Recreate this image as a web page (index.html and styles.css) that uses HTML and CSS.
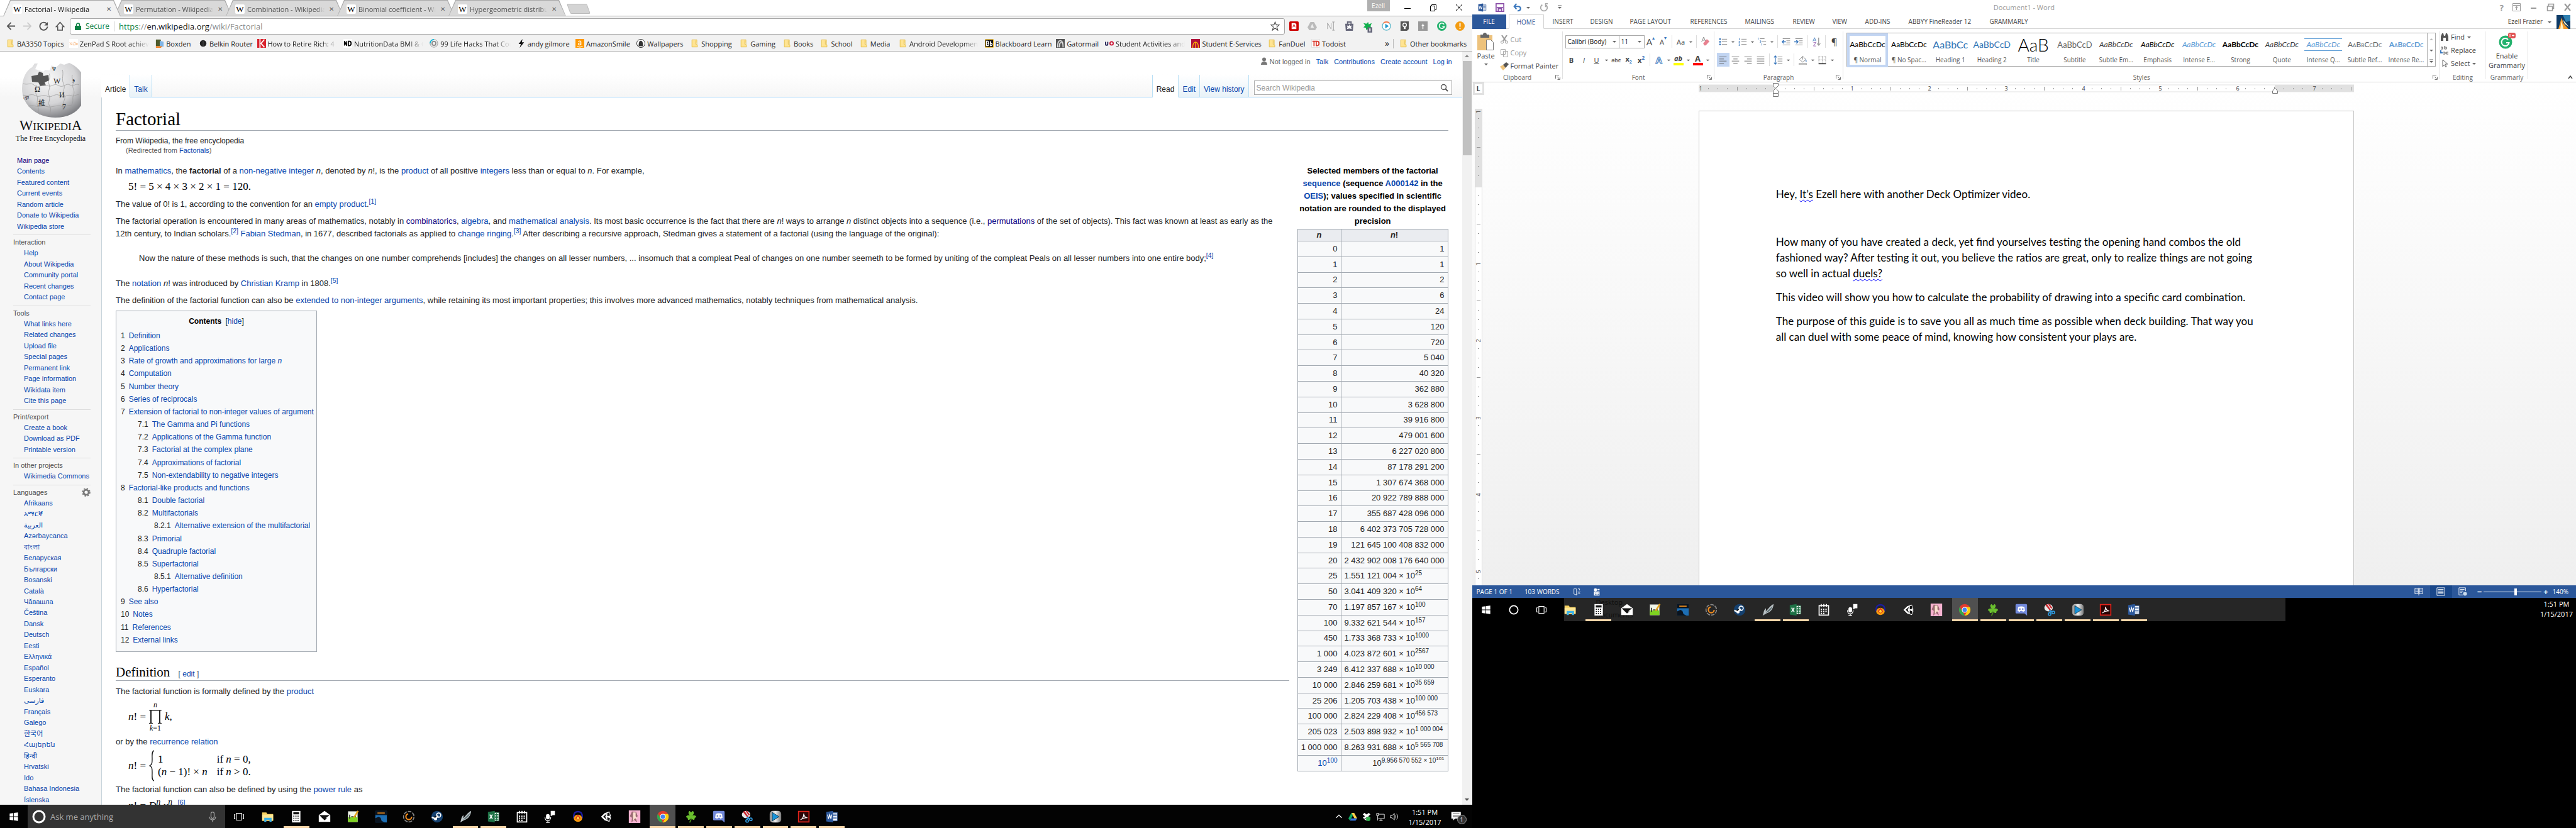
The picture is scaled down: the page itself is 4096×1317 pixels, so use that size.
FILE: index.html
```html
<!DOCTYPE html>
<html lang="en">
<head>
<meta charset="utf-8">
<title>Factorial - Wikipedia</title>
<link rel="stylesheet" href="styles.css">
</head>
<body>
<svg class="defs" aria-hidden="true">
  <defs>
    <radialGradient id="globeFill" cx="40%" cy="30%" r="75%"><stop offset="0" stop-color="#fafafa"/><stop offset=".6" stop-color="#d4d4d6"/><stop offset="1" stop-color="#77787c"/></radialGradient>
    <linearGradient id="silver" x1="0" x2="1"><stop offset="0" stop-color="#888"/><stop offset=".5" stop-color="#eee"/><stop offset="1" stop-color="#777"/></linearGradient>
    <pattern id="ticks" width="122" height="11" patternUnits="userSpaceOnUse"><path d="M15.500 5v2M30.500 5v2M45.500 5v2M61.500 3v6M76.500 5v2M91.500 5v2M106.500 5v2" stroke="#999"/></pattern>
    <pattern id="vticks" width="11" height="122" patternUnits="userSpaceOnUse"><path d="M5 15.500h2M5 30.500h2M5 45.500h2M3 61.500h6M5 76.500h2M5 91.500h2M5 106.500h2" stroke="#999"/></pattern>
    <symbol id="i-win" viewBox="0 0 24 24"><path fill="#fff" d="M4 6l7-1v6.500H4zM12 4.800L20 4v7.500h-8zM4 12.500h7V19l-7-1zM12 12.500h8V20l-8-1z"/></symbol>
    <symbol id="i-ring" viewBox="0 0 24 24"><circle cx="12" cy="12" r="8" fill="none" stroke="#fff" stroke-width="2"/></symbol>
    <symbol id="i-view" viewBox="0 0 24 24"><path fill="none" stroke="#fff" stroke-width="1.300" d="M7 5.500h10v13H7zM5 8H3v8h2M19 8h2v8h-2"/></symbol>
    <symbol id="i-folder" viewBox="0 0 24 24"><path fill="#f5cf5f" d="M1 4h8l2 3h11v13H1z"/><path fill="#fde694" d="M1 8h21v11H1z"/><path fill="#3eb3e8" d="M5 22v-8h14v8h-4v-4H9v4z"/></symbol>
    <symbol id="i-calc" viewBox="0 0 24 24"><path fill="#fff" d="M4 1h16v22H4z"/><path stroke="#111" stroke-width="2" stroke-dasharray="2 2" d="M6.500 11h12M6.500 15h12M6.500 19h12"/><path fill="#111" d="M6.500 3.500h11v4h-11z"/></symbol>
    <symbol id="i-mail" viewBox="0 0 24 24"><path fill="#fff" d="M12 1l11 8v13H1V9z"/><path fill="#111" d="M2 9h20l-8 6h3l-5 4-5-5z"/></symbol>
    <symbol id="i-npp" viewBox="0 0 24 24"><path fill="#f1f6e9" stroke="#999" d="M3 2h18v20H3z"/><path fill="#7ed321" d="M3 13h18v9H3z"/><path stroke="#333" stroke-width="2" d="M6 8v8M9 12h4M14 12h4"/><path stroke="#e6a117" stroke-width="3" d="M22 1l-8 13"/></symbol>
    <symbol id="i-kindle" viewBox="0 0 24 24"><path fill="#1d6fb5" d="M1 1h22v22H1z"/><path fill="#0a1420" d="M1 1h22v8H1zM1 23V15l6-3 4 2 2 6 6 3z"/><path stroke="#e88a1b" stroke-width="2" d="M5 5h14"/></symbol>
    <symbol id="i-origin" viewBox="0 0 24 24"><circle cx="12" cy="12" r="10" fill="none" stroke="#888" stroke-width="2" stroke-dasharray="7 2"/><circle cx="12" cy="12" r="5.500" fill="none" stroke="#f28c1e" stroke-width="2.500" stroke-dasharray="24 11"/></symbol>
    <symbol id="i-steam" viewBox="0 0 24 24"><circle cx="12" cy="12" r="11" fill="#14406f"/><circle cx="15" cy="9" r="4" fill="none" stroke="#fff" stroke-width="2"/><circle cx="9" cy="16" r="3" fill="#fff"/><path stroke="#fff" stroke-width="3" d="M2 13l7 3 5-6"/></symbol>
    <symbol id="i-feather" viewBox="0 0 24 24"><path fill="#b9c1c4" d="M23 1c-1 9-5 15-14 18l-7 4c3-6 1-9 6-14 1 2 0 4 0 6C12 12 15 5 23 1z"/><path fill="#5c6c70" d="M21 5c-3 9-9 11-13 13 3-5 8-8 13-13z"/></symbol>
    <symbol id="i-excel" viewBox="0 0 24 24"><path fill="#fff" stroke="#1e7145" d="M11 4h11v16H11z"/><path stroke="#1e7145" stroke-width="1.500" d="M14 8h7M14 11h7M14 14h7M14 17h7M17.500 5v14"/><path fill="#1e7145" d="M1 3l13-2v22L1 21z"/><path stroke="#fff" stroke-width="2" d="M4.500 8l5 8M9.500 8l-5 8"/></symbol>
    <symbol id="i-cal" viewBox="0 0 24 24"><path fill="none" stroke="#fff" stroke-width="2" d="M3 4h18v18H3zM7 1v5M12 1v5M17 1v5"/><path stroke="#fff" stroke-width="2.500" stroke-dasharray="2.500 2" d="M6 11h13M6 15h13M6 19h9"/></symbol>
    <symbol id="i-mic" viewBox="0 0 24 24"><path fill="#fff" d="M14 1h8v8h-4l-4 2z"/><rect x="5" y="7" width="7" height="10" rx="3.500" fill="#fff"/><path fill="none" stroke="#fff" stroke-width="1.500" d="M3 13c0 9 11 9 11 0M8.500 19v4M5 23h7"/></symbol>
    <symbol id="i-aud" viewBox="0 0 24 24"><path fill="none" stroke="#1c1c9c" stroke-width="3" d="M4 15V9c1-9 15-9 16 0v6"/><ellipse cx="12" cy="15" rx="8" ry="7" fill="#f79b0c"/><path fill="#d22" d="M7 15l5-7 5 7-5 4z"/><path fill="#fd3" d="M9 15l3-4 3 4-3 3z"/></symbol>
    <symbol id="i-unity" viewBox="0 0 24 24"><path fill="#fff" d="M2 12L9 5l9-3 3 9-2 1 2 2-3 8-9-3z"/><path fill="#111" d="M6 12l7-6-3 6 3 6zM14 5l4-1 1 6-5 1zM14 13l5 2-1 5-4-1z"/></symbol>
    <symbol id="i-girl" viewBox="0 0 24 24"><path fill="#f7b2d0" d="M1 0h22v24H1z"/><path fill="#9a6a72" d="M7 2l8 1 3 8-4 3 3 9-6-5-5 5 1-9-4-3z"/><path fill="#fbe0cf" d="M9 4h5v7l4 6-5-2-4 5z"/></symbol>
    <symbol id="i-chrome" viewBox="0 0 24 24"><circle cx="12" cy="12" r="11" fill="#e33b2e"/><path fill="#2da94f" d="M2.500 6.500L9 17l3 6A11 11 0 0 1 2.500 6.500z"/><path fill="#fdd20a" d="M12 7h9.800A11 11 0 0 1 12 23l5-9z"/><circle cx="12" cy="12" r="5.500" fill="#fff"/><circle cx="12" cy="12" r="4.200" fill="#4285f4"/></symbol>
    <symbol id="i-clover" viewBox="0 0 24 24"><path fill="none" stroke="#4a8d1c" stroke-width="2" d="M12 11c1 5 0 8-3 12"/><path fill="#6abf2e" d="M12 11C7 9 5 4 9 1l3 3 3-3c4 3 2 8-3 10zM12 11c-4-3-9-2-10 2l3 1 1 4c4 0 7-3 6-7zM12 11c4-3 9-2 10 2l-3 1-1 4c-4 0-7-3-6-7z"/></symbol>
    <symbol id="i-discord" viewBox="0 0 24 24"><path fill="#7289da" d="M3 1h18a2 2 0 0 1 2 2v20l-5-4H3a2 2 0 0 1-2-2V3a2 2 0 0 1 2-2z"/><path fill="#fff" d="M6 7c4-2 8-2 12 0l1 7-4 2-1-2h-4l-1 2-4-2z"/><path fill="#7289da" d="M8 9h2.500v3H8zM13.500 9H16v3h-2.500z"/></symbol>
    <symbol id="i-snip" viewBox="0 0 24 24"><ellipse cx="10" cy="8" rx="8" ry="7" fill="#e8e8e8"/><path fill="#c9252c" d="M4 3l3-2 8 12-2 1zM9 1l3 0 5 7-2 2z"/><path fill="none" stroke="#2f9be0" stroke-width="2" d="M11 13l5 3M15 12l-3 6"/><circle cx="12" cy="20" r="2.500" fill="none" stroke="#2f9be0" stroke-width="2"/><circle cx="19" cy="17" r="2.500" fill="none" stroke="#2f9be0" stroke-width="2"/></symbol>
    <symbol id="i-play" viewBox="0 0 24 24"><rect x="1" y="1" width="22" height="22" rx="6" fill="url(#silver)"/><path fill="#1892d8" stroke="#134" d="M6 4l13 8-13 8z"/></symbol>
    <symbol id="i-pdf" viewBox="0 0 24 24"><path fill="#2b0505" stroke="#e2231a" stroke-width="2" d="M2 2h20v20H2z"/><path fill="none" stroke="#fff" stroke-width="1.500" d="M6 18c4-2 6-7 6-12 0 4 3 8 7 8-5 0-10 1-13 4z"/></symbol>
    <symbol id="i-word" viewBox="0 0 24 24"><path fill="#fff" stroke="#2b579a" d="M11 4h11v16H11z"/><path stroke="#2b579a" stroke-width="1.500" d="M14 7h7M14 10h7M14 13h7M14 16h7"/><path fill="#2b579a" d="M1 3l13-2v22L1 21z"/><path fill="none" stroke="#fff" stroke-width="1.600" d="M3.500 8l1.700 8 2.300-8 2.300 8 1.700-8"/></symbol>
    <symbol id="f-folder" viewBox="0 0 14 16"><path fill="#ffe492" stroke="#e5bd43" d="M1.500 1.500h7v8l3 1v4h-10z"/><path fill="#ffe492" stroke="#e5bd43" d="M8.500 1.500h2v8"/></symbol>
    <symbol id="caret" viewBox="0 0 8 8"><path fill="#666" d="M1 3h6L4 6z"/></symbol>
    <symbol id="launcher" viewBox="0 0 8 8"><path fill="none" stroke="#777" d="M.5 6V.5H6M3 3l4 4M7.500 3.500v4h-4"/></symbol>
  </defs>
</svg>
<div class="desktop">
<section class="screen-left" aria-label="Browser">
  <header class="chrome">
    <div class="tabstrip">
      <ul class="tabs">
        <li class="tab on"><b class="fav">W</b><span>Factorial - Wikipedia</span><button aria-label="Close tab">✕</button></li>
        <li class="tab"><b class="fav">W</b><span>Permutation - Wikipedia</span><button aria-label="Close tab">✕</button></li>
        <li class="tab"><b class="fav">W</b><span>Combination - Wikipedia</span><button aria-label="Close tab">✕</button></li>
        <li class="tab"><b class="fav">W</b><span>Binomial coefficient - Wikipedia</span><button aria-label="Close tab">✕</button></li>
        <li class="tab"><b class="fav">W</b><span>Hypergeometric distribution</span><button aria-label="Close tab">✕</button></li>
      </ul>
      <button class="newtab" aria-label="New tab"></button>
      <div class="winctl"><button class="user">Ezell</button>
        <button aria-label="Minimize"><svg width="11" height="11"><path d="M0 6.500h10" stroke="#000"/></svg></button>
        <button aria-label="Restore"><svg width="11" height="11"><path d="M.5 2.500h7v8h-7zM2.500 2V.5h7v8H8" fill="none" stroke="#000"/></svg></button>
        <button aria-label="Close"><svg width="11" height="11"><path d="M0 0l10 10M10 0L0 10" stroke="#000"/></svg></button></div>
    </div>
    <div class="toolbar">
      <button aria-label="Back"><svg viewBox="0 0 16 16"><path d="M15 8H2M8 2L2 8l6 6" fill="none" stroke="#555" stroke-width="2"/></svg></button>
      <button aria-label="Forward"><svg viewBox="0 0 16 16"><path d="M1 8h13M8 2l6 6-6 6" fill="none" stroke="#ccc" stroke-width="2"/></svg></button>
      <button aria-label="Reload"><svg viewBox="0 0 16 16"><path d="M13 4a6.500 6.500 0 1 0 1.500 5" fill="none" stroke="#555" stroke-width="2"/><path d="M15 1v6H9z" fill="#555"/></svg></button>
      <button aria-label="Home"><svg viewBox="0 0 16 16"><path d="M1.500 9L8 1.500 14.500 9H12v6H4V9z" fill="none" stroke="#555" stroke-width="1.600"/></svg></button>
      <div class="omnibox">
        <svg width="10" height="12" viewBox="0 0 10 12"><path d="M2.500 6V3.500a2.500 2.500 0 0 1 5 0V6" fill="none" stroke="#0b8043" stroke-width="1.500"/><path d="M0 5h10v7H0z" fill="#0b8043"/></svg>
        <span class="secure">Secure</span>
        <span class="url"><i>https</i>://<b>en.wikipedia.org</b>/wiki/Factorial</span>
        <svg class="star" width="15" height="15" viewBox="0 0 16 16"><path d="M8 1l2 5h5l-4 3.500L12.500 15 8 11.500 3.500 15 5 9.500 1 6h5z" fill="none" stroke="#555" stroke-width="1.300"/></svg>
      </div>
      <div class="exts">
        <svg viewBox="0 0 16 16"><rect width="16" height="16" rx="2" fill="#c00"/><path d="M4 3h6l2 2v8H4z" fill="#fff"/><path d="M6 10l2-5 2 5" stroke="#c00" fill="none"/></svg>
        <svg viewBox="0 0 16 16"><path d="M5 1h6l5 9-3 5H3l-3-5z" fill="#bbb"/><path d="M8 4l3 7H5z" fill="#eee"/></svg>
        <svg viewBox="0 0 16 16"><path d="M2 13V3l6 10V3M12 1v14M10 1h4M10 15h4" fill="none" stroke="#999"/></svg>
        <svg viewBox="0 0 16 16"><path d="M1 4h14l-1 12H2z" fill="#66677a"/><path d="M5 5V1h6v4" fill="none" stroke="#66677a" stroke-width="2"/><path d="M8 5l1 3 3-1-1 3 1 3-4-1-4 1 1-3-1-3 3 1z" fill="#fff"/></svg>
        <svg viewBox="0 0 16 16"><path d="M1 3l5 1 3-3 1 4 5-2-2 5 2 4-5 0-4 3-1-4-4-1 3-3z" fill="#0fb04c"/><path d="M8 10h8v9H8z" fill="#66677a"/><path d="M12 12v5" stroke="#fff" stroke-width="2"/></svg>
        <svg viewBox="0 0 16 16"><circle cx="8" cy="8" r="7" fill="#fff" stroke="#6bc" stroke-width="1.500"/><path d="M3 3a7 7 0 0 1 10 0" stroke="#f74" fill="none" stroke-width="2"/><path d="M6 4l6 4-6 4z" fill="#29c"/></svg>
        <svg viewBox="0 0 16 16"><path d="M1 0h14v13l-3 3H1z" fill="#555"/><circle cx="8" cy="6" r="3" fill="none" stroke="#fff" stroke-width="1.500"/><path d="M8 9v4" stroke="#fff" stroke-width="3"/></svg>
        <svg viewBox="0 0 16 16"><path d="M0 0h16v16H0z" fill="#999"/><path d="M8 4v9M6 7h4" stroke="#fff" stroke-width="1.500"/></svg>
        <svg viewBox="0 0 16 16"><circle cx="8" cy="8" r="8" fill="#23b26d"/><path d="M12 5a4.500 4.500 0 1 0 .5 4H9" fill="none" stroke="#fff" stroke-width="1.700"/></svg>
        <svg viewBox="0 0 16 16"><circle cx="8" cy="8" r="8" fill="#f39c12"/><path d="M8 3v6M8 11v2" stroke="#fff" stroke-width="2"/></svg>
      </div>
    </div>
    <nav class="bookmarks" aria-label="Bookmarks">
      <a href="#"><svg><use href="#f-folder"/></svg>BA3350 Topics</a>
      <a href="#" class="long"><svg viewBox="0 0 16 16"><path fill="#fff" d="M0 0h16v16H0z"/><path d="M1 6l4 5M5 6l-4 5M8 6h3v5H7V8M13 11V8h2v3" stroke="#f7b27a" fill="none"/></svg>ZenPad S Root achieved</a>
      <a href="#"><svg viewBox="0 0 16 16"><path fill="#4d5a2c" d="M1 1h9v12H1z"/><path fill="#7fb5e6" d="M8 3l7 2v9H8z"/><path fill="#f58220" d="M1 13h12l-3 3H1z"/></svg>Boxden</a>
      <a href="#"><svg viewBox="0 0 16 16"><circle cx="8" cy="8" r="6" fill="#222"/><path d="M8 3v10" stroke="#555"/></svg>Belkin Router</a>
      <a href="#" class="long"><svg viewBox="0 0 16 16"><path fill="#d9232e" d="M0 0h16v16H0z"/><path d="M5 0v16M13 1L7 8l6 7" stroke="#fff" stroke-width="2" fill="none"/></svg>How to Retire Rich: 4 Steps</a>
      <a href="#" class="long"><svg viewBox="0 0 16 16"><path fill="#fff" d="M0 0h16v16H0z"/><path d="M2 12V4l4 8V4M9 4v8h2c4 0 4-8 0-8z" stroke="#000" stroke-width="2" fill="none"/></svg>NutritionData BMI &amp; Calories</a>
      <a href="#" class="long"><svg viewBox="0 0 16 16"><circle cx="8" cy="8" r="7" fill="none" stroke="#888"/><circle cx="8" cy="8" r="3.500" fill="none" stroke="#888" stroke-width="2"/><path d="M1 8a7 7 0 0 1 7-7" stroke="#1bd" stroke-width="2" fill="none"/></svg>99 Life Hacks That Could</a>
      <a href="#"><svg viewBox="0 0 16 16"><path d="M10 0L3 9h4l-2 7 8-10H9z" fill="#111"/></svg>andy gilmore</a>
      <a href="#"><svg viewBox="0 0 16 16"><path fill="#f90" d="M0 0h16v16H0z"/><path d="M5 5c1-2 5-2 5 0v6M10 7c-6 0-6 4-3 4 2 0 3-2 3-3M3 13c3 2 7 2 10 0" stroke="#fff" stroke-width="1.300" fill="none"/></svg>AmazonSmile</a>
      <a href="#"><svg viewBox="0 0 16 16"><circle cx="8" cy="8" r="7.500" fill="#fff" stroke="#222"/><path d="M4 13c0-6 1-10 4-10s4 4 4 10z" fill="#333"/></svg>Wallpapers</a>
      <a href="#"><svg><use href="#f-folder"/></svg>Shopping</a>
      <a href="#"><svg><use href="#f-folder"/></svg>Gaming</a>
      <a href="#"><svg><use href="#f-folder"/></svg>Books</a>
      <a href="#"><svg><use href="#f-folder"/></svg>School</a>
      <a href="#"><svg><use href="#f-folder"/></svg>Media</a>
      <a href="#" class="long"><svg><use href="#f-folder"/></svg>Android Development</a>
      <a href="#"><svg viewBox="0 0 16 16"><path fill="#111" stroke="#fb0" d="M.5 1h15v14H.5z"/><path d="M3 4v8h2c3 0 3-4 0-4 2 0 2-4 0-4zM10 4v8h1c3 0 3-4 0-4z" stroke="#fff" fill="none" stroke-width="1.500"/></svg>Blackboard Learn</a>
      <a href="#"><svg viewBox="0 0 16 16"><path fill="#555" d="M0 0h16v16H0z"/><path d="M3 15c0-6 1-12 5-12s5 5 5 12M6 15l1-7 3-2" stroke="#ddd" stroke-width="2" fill="none"/></svg>Gatormail</a>
      <a href="#" class="long"><svg viewBox="0 0 16 16"><path d="M1 5v4c0 3 4 3 4 0V5" stroke="#225" stroke-width="2" fill="none"/><circle cx="12" cy="8" r="3" fill="none" stroke="#c13" stroke-width="2"/></svg>Student Activities and</a>
      <a href="#"><svg viewBox="0 0 16 16"><path fill="#b0123b" d="M0 0h16v16H0z"/><path d="M3 16C2 2 14 2 13 16M8 6v10" stroke="#fb0" stroke-width="1.500" fill="none"/></svg>Student E-Services</a>
      <a href="#"><svg><use href="#f-folder"/></svg>FanDuel</a>
      <a href="#"><svg viewBox="0 0 16 16"><path fill="#fff" stroke="#ddd" d="M.5.5h15v15H.5z"/><path d="M2 4h6M5 4v9M9 4v8h2c4 0 4-8 0-8z" stroke="#d9372b" stroke-width="2" fill="none"/></svg>Todoist</a>
      <button class="more" aria-label="More bookmarks">»</button>
      <a href="#" class="other"><svg><use href="#f-folder"/></svg>Other bookmarks</a>
    </nav>
  </header>

  <div class="viewport">
    <aside class="side">
      <a href="#" class="logo" aria-label="Wikipedia">
        <svg width="96" height="88" viewBox="0 0 96 88">
          <path fill="url(#globeFill)" d="M22 2l5 0-4 9 7 2 6 2 3-3 7 1 3-8 7 3 7-6 6 2 8-3c18 8 26 22 26 42 0 27-18 45-48 45S2 68 2 42C2 24 10 12 18 8z"/>
          <path fill="#555" d="M17 22l10-2 2-5 6 2 1 5 8-2 1 9-7 3 2 5-9 1-3-6-10-1z"/>
          <path fill="none" stroke="#999" stroke-width=".7" d="M4 34c8 3 12-3 18 3s12-4 20 0 10-5 18 0 12-5 18-1 8-3 15 0M3 52c9 3 13-3 20 1s12-3 19 1 12-6 20-1 12-3 18 0 8-3 13-1M12 70c8-3 14 2 20 0s10 2 16 1 12-3 17-1 10-3 16-1M24 36c5 6-3 10 1 16s-1 12 2 18-1 9 4 14M45 18c4 8-3 10 0 17s-3 11 0 18-3 11 1 17-1 10 1 15M66 12c3 7-2 14 2 22s-3 11 1 18-3 10-2 18-4 8-5 13M82 20c-2 6 3 9 1 15s4 10 1 17 1 8-3 16"/>
          <g fill="#222" font-family="Liberation Serif, serif" font-size="12"><text x="22" y="47">Ω</text><text x="52" y="34">W</text><text x="61" y="56">И</text><text x="28" y="69" font-family="Noto Sans CJK SC, sans-serif" font-size="11">維</text><text x="66" y="75">7</text><text x="82" y="30" font-size="9">و</text><text x="4" y="60" font-size="9">ঞ</text><text x="50" y="14" font-size="8">Ψ</text></g>
        </svg>
        <span class="wordmark"><b>W</b>IKIPEDI<b>A</b></span>
        <span class="tagline">The Free Encyclopedia</span>
      </a>
      <ul class="top"><li><a href="#" class="seen">Main page</a></li><li><a href="#">Contents</a></li><li><a href="#">Featured content</a></li><li><a href="#">Current events</a></li><li><a href="#">Random article</a></li><li><a href="#">Donate to Wikipedia</a></li><li><a href="#">Wikipedia store</a></li></ul>
      <h3>Interaction</h3>
      <ul><li><a href="#">Help</a></li><li><a href="#">About Wikipedia</a></li><li><a href="#">Community portal</a></li><li><a href="#">Recent changes</a></li><li><a href="#">Contact page</a></li></ul>
      <h3>Tools</h3>
      <ul><li><a href="#">What links here</a></li><li><a href="#">Related changes</a></li><li><a href="#">Upload file</a></li><li><a href="#">Special pages</a></li><li><a href="#">Permanent link</a></li><li><a href="#">Page information</a></li><li><a href="#">Wikidata item</a></li><li><a href="#">Cite this page</a></li></ul>
      <h3>Print/export</h3>
      <ul><li><a href="#">Create a book</a></li><li><a href="#">Download as PDF</a></li><li><a href="#">Printable version</a></li></ul>
      <h3>In other projects</h3>
      <ul><li><a href="#">Wikimedia Commons</a></li></ul>
      <h3>Languages <svg width="14" height="14" viewBox="0 0 16 16"><circle cx="8" cy="8" r="4.500" fill="none" stroke="#777" stroke-width="3"/><circle cx="8" cy="8" r="6.800" fill="none" stroke="#777" stroke-width="2" stroke-dasharray="2.700 2.640"/></svg></h3>
      <ul><li><a href="#">Afrikaans</a></li><li><a href="#">አማርኛ</a></li><li><a href="#">العربية</a></li><li><a href="#">Azərbaycanca</a></li><li><a href="#">বাংলা</a></li><li><a href="#">Беларуская</a></li><li><a href="#">Български</a></li><li><a href="#">Bosanski</a></li><li><a href="#">Català</a></li><li><a href="#">Чӑвашла</a></li><li><a href="#">Čeština</a></li><li><a href="#">Dansk</a></li><li><a href="#">Deutsch</a></li><li><a href="#">Eesti</a></li><li><a href="#">Ελληνικά</a></li><li><a href="#">Español</a></li><li><a href="#">Esperanto</a></li><li><a href="#">Euskara</a></li><li><a href="#">فارسی</a></li><li><a href="#">Français</a></li><li><a href="#">Galego</a></li><li><a href="#">한국어</a></li><li><a href="#">Հայերեն</a></li><li><a href="#">हिन्दी</a></li><li><a href="#">Hrvatski</a></li><li><a href="#">Ido</a></li><li><a href="#">Bahasa Indonesia</a></li><li><a href="#">Íslenska</a></li></ul>
    </aside>

    <div class="main">
      <header class="wikihead">
        <nav class="personal"><svg width="10" height="13" viewBox="0 0 10 13"><circle cx="5" cy="3.500" r="3" fill="#777"/><path d="M0 12c0-7 10-7 10 0z" fill="#777"/></svg><span>Not logged in</span><a href="#">Talk</a><a href="#">Contributions</a><a href="#">Create account</a><a href="#">Log in</a></nav>
        <div class="wikitabs">
          <a href="#" class="on">Article</a><a href="#">Talk</a>
          <span class="fill"></span>
          <a href="#" class="on">Read</a><a href="#">Edit</a><a href="#">View history</a>
          <form class="search"><input type="text" aria-label="Search Wikipedia" placeholder="Search Wikipedia"><svg width="13" height="13" viewBox="0 0 13 13"><circle cx="5.500" cy="5.500" r="4" fill="none" stroke="#555" stroke-width="1.500"/><path d="M8.500 8.500L12 12" stroke="#555" stroke-width="2"/></svg></form>
        </div>
      </header>
      <article>
        <h1>Factorial</h1>
        <p class="from">From Wikipedia, the free encyclopedia</p>
        <p class="redir">(Redirected from <a href="#">Factorials</a>)</p>
        <div class="body">
          <div class="prose">
            <p class="p1">In <a href="#">mathematics</a>, the <b>factorial</b> of a <a href="#">non-negative integer</a> <i>n</i>, denoted by <i>n</i>!, is the <a href="#">product</a> of all positive <a href="#">integers</a> less than or equal to <i>n</i>. For example,</p>
            <p class="math m1">5! = 5 × 4 × 3 × 2 × 1 = 120.</p>
            <p class="p2">The value of 0! is 1, according to the convention for an <a href="#">empty product</a>.<sup><a href="#">[1]</a></sup></p>
            <p class="p3">The factorial operation is encountered in many areas of mathematics, notably in <a href="#" class="seen">combinatorics</a>, <a href="#">algebra</a>, and <a href="#">mathematical analysis</a>. Its most basic occurrence is the fact that there are <i>n</i>! ways to arrange <i>n</i> distinct objects into a sequence (i.e., <a href="#" class="seen">permutations</a> of the set of objects). This fact was known at least as early as the<br>12th century, to Indian scholars.<sup><a href="#">[2]</a></sup> <a href="#">Fabian Stedman</a>, in 1677, described factorials as applied to <a href="#">change ringing</a>.<sup><a href="#">[3]</a></sup> After describing a recursive approach, Stedman gives a statement of a factorial (using the language of the original):</p>
            <blockquote>Now the nature of these methods is such, that the changes on one number comprehends [includes] the changes on all lesser numbers, ... insomuch that a compleat Peal of changes on one number seemeth to be formed by uniting of the compleat Peals on all lesser numbers into one entire body;<sup><a href="#">[4]</a></sup></blockquote>
            <p class="p4">The <a href="#">notation</a> <i>n</i>! was introduced by <a href="#">Christian Kramp</a> in 1808.<sup><a href="#">[5]</a></sup></p>
            <p class="p3">The definition of the factorial function can also be <a href="#">extended to non-integer arguments</a>, while retaining its most important properties; this involves more advanced mathematics, notably techniques from mathematical analysis.</p>
            <nav class="toc">
              <h4>Contents <span>[<a href="#">hide</a>]</span></h4>
              <ul>
                <li>1<a href="#">Definition</a></li><li>2<a href="#">Applications</a></li><li>3<a href="#">Rate of growth and approximations for large <i>n</i></a></li><li>4<a href="#">Computation</a></li><li>5<a href="#">Number theory</a></li><li>6<a href="#">Series of reciprocals</a></li><li>7<a href="#">Extension of factorial to non-integer values of argument</a></li>
                <li class="l2">7.1<a href="#">The Gamma and Pi functions</a></li><li class="l2">7.2<a href="#">Applications of the Gamma function</a></li><li class="l2">7.3<a href="#">Factorial at the complex plane</a></li><li class="l2">7.4<a href="#">Approximations of factorial</a></li><li class="l2">7.5<a href="#">Non-extendability to negative integers</a></li>
                <li>8<a href="#">Factorial-like products and functions</a></li><li class="l2">8.1<a href="#">Double factorial</a></li><li class="l2">8.2<a href="#">Multifactorials</a></li><li class="l3">8.2.1<a href="#">Alternative extension of the multifactorial</a></li><li class="l2">8.3<a href="#">Primorial</a></li><li class="l2">8.4<a href="#">Quadruple factorial</a></li><li class="l2">8.5<a href="#">Superfactorial</a></li><li class="l3">8.5.1<a href="#">Alternative definition</a></li><li class="l2">8.6<a href="#">Hyperfactorial</a></li>
                <li>9<a href="#">See also</a></li><li>10<a href="#">Notes</a></li><li>11<a href="#">References</a></li><li>12<a href="#">External links</a></li>
              </ul>
            </nav>
            <h2>Definition <small>[ <a href="#">edit</a> ]</small></h2>
            <p class="p5">The factorial function is formally defined by the <a href="#">product</a></p>
            <div class="math prod"><span><i>n</i>! =</span><span class="stack"><i>n</i><svg width="20" height="22" viewBox="0 0 20 22"><path d="M0 0h20v1l-2 .5v19l2 .5v1h-6v-1l2-.5V1.500H4v19l2 .5v1H0v-1l2-.5v-19L0 1z" fill="#222"/></svg><em><i>k</i>=1</em></span><span><i>k</i>,</span></div>
            <p>or by the <a href="#">recurrence relation</a></p>
            <div class="math cases"><span><i>n</i>! =</span><svg width="9" height="50" viewBox="0 0 9 50"><path d="M8 1C4 2 5 8 5 14s0 9-4 11c4 2 4 5 4 11s-1 12 3 13" fill="none" stroke="#111" stroke-width="1.300"/></svg><span>1<br>(<i>n</i> − 1)! × <i>n</i></span><span>if <i>n</i> = 0,<br>if <i>n</i> &gt; 0.</span></div>
            <p>The factorial function can also be defined by using the <a href="#">power rule</a> as</p>
            <p class="math m2"><i>n</i>! = <i>D</i><sup><i>n</i></sup> <i>x</i><sup><i>n</i></sup>. <sup class="ref"><a href="#">[6]</a></sup></p>
          </div>
          <table>
            <caption>Selected members of the factorial<br><a href="#">sequence</a> (sequence <a href="#">A000142</a> in the<br><a href="#">OEIS</a>); values specified in scientific<br>notation are rounded to the displayed<br>precision</caption>
            <thead><tr><th class="n"><i>n</i></th><th><i>n</i>!</th></tr></thead>
            <tbody>
            <tr><td>0</td><td>1</td></tr><tr><td>1</td><td>1</td></tr><tr><td>2</td><td>2</td></tr><tr><td>3</td><td>6</td></tr><tr><td>4</td><td>24</td></tr><tr><td>5</td><td>120</td></tr><tr><td>6</td><td>720</td></tr><tr><td>7</td><td>5 040</td></tr><tr><td>8</td><td>40 320</td></tr><tr><td>9</td><td>362 880</td></tr><tr><td>10</td><td>3 628 800</td></tr><tr><td>11</td><td>39 916 800</td></tr><tr><td>12</td><td>479 001 600</td></tr><tr><td>13</td><td>6 227 020 800</td></tr><tr><td>14</td><td>87 178 291 200</td></tr><tr><td>15</td><td>1 307 674 368 000</td></tr><tr><td>16</td><td>20 922 789 888 000</td></tr><tr><td>17</td><td>355 687 428 096 000</td></tr><tr><td>18</td><td>6 402 373 705 728 000</td></tr><tr><td>19</td><td>121 645 100 408 832 000</td></tr><tr><td>20</td><td>2 432 902 008 176 640 000</td></tr>
            <tr><td>25</td><td class="sci">1.551 121 004 × 10<sup>25</sup></td></tr><tr><td>50</td><td class="sci">3.041 409 320 × 10<sup>64</sup></td></tr><tr><td>70</td><td class="sci">1.197 857 167 × 10<sup>100</sup></td></tr><tr><td>100</td><td class="sci">9.332 621 544 × 10<sup>157</sup></td></tr><tr><td>450</td><td class="sci">1.733 368 733 × 10<sup>1000</sup></td></tr><tr><td>1 000</td><td class="sci">4.023 872 601 × 10<sup>2567</sup></td></tr><tr><td>3 249</td><td class="sci">6.412 337 688 × 10<sup>10 000</sup></td></tr><tr><td>10 000</td><td class="sci">2.846 259 681 × 10<sup>35 659</sup></td></tr><tr><td>25 206</td><td class="sci">1.205 703 438 × 10<sup>100 000</sup></td></tr><tr><td>100 000</td><td class="sci">2.824 229 408 × 10<sup>456 573</sup></td></tr><tr><td>205 023</td><td class="sci">2.503 898 932 × 10<sup>1 000 004</sup></td></tr><tr><td>1 000 000</td><td class="sci">8.263 931 688 × 10<sup>5 565 708</sup></td></tr><tr><td><a href="#">10<sup>100</sup></a></td><td>10<sup>9.956 570 552 × 10<sup>101</sup></sup></td></tr>
            </tbody>
          </table>
        </div>
      </article>
    </div>
    <div class="scroll"><svg width="15" height="15"><path d="M4 9h7L7.500 5z" fill="#888"/></svg><span class="thumb"></span><svg width="15" height="15"><path d="M4 5h7L7.500 9z" fill="#555"/></svg></div>
  </div>

  <footer class="taskbar">
    <button aria-label="Start"><svg><use href="#i-win"/></svg></button>
    <label class="cortana"><svg viewBox="0 0 24 24"><circle cx="12" cy="12" r="9" fill="none" stroke="#fff" stroke-width="3"/></svg><input type="text" placeholder="Ask me anything" aria-label="Ask me anything"><svg class="micr" viewBox="0 0 24 24"><rect x="9" y="3" width="6" height="12" rx="3" fill="none" stroke="#aaa" stroke-width="1.500"/><path d="M6 12c0 8 12 8 12 0M12 18v4" fill="none" stroke="#aaa" stroke-width="1.500"/></svg></label>
    <button aria-label="Task view"><svg><use href="#i-view"/></svg></button>
    <div class="apps">
      <button aria-label="File Explorer"><svg><use href="#i-folder"/></svg></button><button class="run" aria-label="Calculator"><svg><use href="#i-calc"/></svg></button><button aria-label="Mail"><svg><use href="#i-mail"/></svg></button><button aria-label="Notepad++"><svg><use href="#i-npp"/></svg></button><button aria-label="Kindle"><svg><use href="#i-kindle"/></svg></button><button aria-label="Origin"><svg><use href="#i-origin"/></svg></button><button aria-label="Steam"><svg><use href="#i-steam"/></svg></button><button class="run" aria-label="Quill"><svg><use href="#i-feather"/></svg></button><button class="run" aria-label="Excel"><svg><use href="#i-excel"/></svg></button><button aria-label="Calendar"><svg><use href="#i-cal"/></svg></button><button aria-label="Voice Recorder"><svg><use href="#i-mic"/></svg></button><button aria-label="Audacity"><svg><use href="#i-aud"/></svg></button><button aria-label="Unity"><svg><use href="#i-unity"/></svg></button><button aria-label="Game"><svg><use href="#i-girl"/></svg></button><button class="run active" aria-label="Chrome"><svg><use href="#i-chrome"/></svg></button><button class="run" aria-label="Clover"><svg><use href="#i-clover"/></svg></button><button class="run" aria-label="Discord"><svg><use href="#i-discord"/></svg></button><button class="run" aria-label="Snipping Tool"><svg><use href="#i-snip"/></svg></button><button class="run" aria-label="Player"><svg><use href="#i-play"/></svg></button><button class="run" aria-label="Acrobat"><svg><use href="#i-pdf"/></svg></button><button class="run" aria-label="Word"><svg><use href="#i-word"/></svg></button>
    </div>
    <div class="tray">
      <svg viewBox="0 0 16 16"><path d="M3 10l5-5 5 5" fill="none" stroke="#fff" stroke-width="1.500"/></svg>
      <svg viewBox="0 0 16 16"><path d="M5.500 1h5L16 11h-5z" fill="#ffcf48"/><path d="M5.500 1L8 6l-5 9-3-4z" fill="#11a861"/><path d="M5 11h11l-3 4H3z" fill="#3777e3"/></svg>
      <svg viewBox="0 0 16 16"><path d="M4 1l4 3 4-3 3 3-4 3 4 3-3 2-4-3-4 3-3-2 4-3-4-3zM4 13l4-3 4 3-4 2z" fill="#fff"/><circle cx="11" cy="12" r="4" fill="#2fae4a"/></svg>
      <svg viewBox="0 0 16 16"><path d="M4 3.500h11v8H4M9 12v3M6 15h6M1 2h4v4H1zM3 6v9" fill="none" stroke="#fff"/></svg>
      <svg viewBox="0 0 16 16"><path d="M1 6h3l4-4v12l-4-4H1zM10 5c1 2 1 4 0 6M12 3c3 3 3 7 0 10" fill="none" stroke="#fff"/></svg>
      <p class="clock">1:51 PM<br>1/15/2017</p>
      <span class="notes"><svg viewBox="0 0 24 24"><path d="M1 2h20v14H9l-4 4v-4H1z" fill="#fff"/><path d="M4 6h14M4 9h14M4 12h14" stroke="#111"/></svg><b>1</b></span>
    </div>
  </footer>
</section>

<section class="screen-right" aria-label="Word">
  <div class="word">
    <header class="wtitle">
      <div class="qat">
        <svg viewBox="0 0 24 24"><use href="#i-word"/></svg>
        <svg viewBox="0 0 16 16"><path d="M1 1h14v14H1z" fill="none" stroke="#8a4fa8" stroke-width="2"/><path d="M2 8h12M5 15v-5h6v5" fill="none" stroke="#8a4fa8" stroke-width="2"/></svg>
        <svg viewBox="0 0 16 16"><path d="M2 6h7c6 0 6 8-1 8M6 1L2 6l4 5" fill="none" stroke="#3b78bd" stroke-width="2.500"/></svg>
        <svg class="tiny"><use href="#caret"/></svg>
        <svg viewBox="0 0 16 16"><path d="M5 3a6 6 0 1 0 6 0M11 7V1h4" fill="none" stroke="#aaa" stroke-width="2"/></svg>
        <svg class="tiny more" viewBox="0 0 8 8"><path d="M1 1h6" stroke="#666"/><path fill="#666" d="M1 3h6L4 6z"/></svg>
      </div>
      <span class="doc-name">Document1 - Word</span>
      <div class="wctl"><b>?</b>
        <svg viewBox="0 0 13 13"><path d="M.5.500h12v12H.5zM.5 3.500h12M6.500 11V5M4 8l2.500-3L9 8" fill="none" stroke="#999"/></svg>
        <svg viewBox="0 0 13 13"><path d="M2 8h9" stroke="#999" stroke-width="2"/></svg>
        <svg viewBox="0 0 13 13"><path d="M1.500 5h8v7h-8zM3.500 4V1.500h8v7H10" fill="none" stroke="#999" stroke-width="1.500"/></svg>
        <svg viewBox="0 0 13 13"><path d="M2 1l9 11M11 1L2 12" stroke="#999" stroke-width="2"/></svg></div>
    </header>
    <nav class="wtabs"><a href="#" class="file">FILE</a><a href="#" class="home">HOME</a><a href="#">INSERT</a><a href="#">DESIGN</a><a href="#">PAGE LAYOUT</a><a href="#">REFERENCES</a><a href="#">MAILINGS</a><a href="#">REVIEW</a><a href="#">VIEW</a><a href="#">ADD-INS</a><a href="#">ABBYY FineReader 12</a><a href="#">GRAMMARLY</a>
      <span class="acct">Ezell Frazier <svg class="tiny"><use href="#caret"/></svg><svg class="avatar" viewBox="0 0 22 22"><path fill="#0d3a66" d="M0 0h22v22H0z"/><path fill="#2e7fb0" d="M10 0h12v9l-7 2z"/><path fill="#f29a2e" d="M3 22L8 4l3 9 8 9z"/><path fill="#fff3c8" d="M6 22L8 9l3 13zM10 7l10 12-7-5z"/></svg></span></nav>
    <div class="ribbon">
      <section class="g clip"><div class="gc">
        <button class="paste"><svg width="27" height="28" viewBox="0 0 27 28"><path fill="#edc27c" d="M0 4h24v24H0z"/><path fill="#666" d="M5 3h4c0-4 6-4 6 0h4v5H5z"/><path fill="#fff" stroke="#777" d="M14.500 11.500h7l4 4v12h-11z"/></svg>Paste<svg class="tiny"><use href="#caret"/></svg></button>
        <div class="col"><button class="off"><svg viewBox="0 0 14 14"><path d="M3 0l6 9M11 0L5 9" stroke="#999" stroke-width="2"/><circle cx="3.500" cy="11" r="2" fill="none" stroke="#999"/><circle cx="10.500" cy="11" r="2" fill="none" stroke="#999"/></svg>Cut</button><button class="off"><svg viewBox="0 0 14 14"><path d="M1.500 1.500h7v8h-7zM5.500 4.500h7v9h-7z" fill="#fff" stroke="#aaa"/></svg>Copy</button><button><svg viewBox="0 0 14 14"><path d="M0 8l5-3 4 5-4 4z" fill="#edc27c"/><path d="M5 5l5-4 4 3-5 6z" fill="#555"/></svg>Format Painter</button></div>
      </div><p>Clipboard<svg class="tiny"><use href="#launcher"/></svg></p></section>
      <section class="g font"><div class="gc rows">
        <div class="row"><button class="combo fam">Calibri (Body)<svg class="tiny"><use href="#caret"/></svg></button><button class="combo size">11<svg class="tiny"><use href="#caret"/></svg></button><button class="big">A<sup>▴</sup></button><button>A<sup>▾</sup></button><hr><button>Aa</button><svg class="c"><use href="#caret"/></svg><hr><button aria-label="Clear"><svg viewBox="0 0 18 18"><path d="M2 9l4-9 4 9M4 6h4" fill="none" stroke="#777"/><path fill="#e8818f" d="M5 12l7-8 5 4-7 8H7z"/></svg></button></div>
        <div class="row"><button><b>B</b></button><button><i>I</i></button><button><u>U</u></button><svg class="c"><use href="#caret"/></svg><button><s>abc</s></button><button><b>x<sub>2</sub></b></button><button><b>x<sup>2</sup></b></button><hr><button class="fx">A</button><svg class="c"><use href="#caret"/></svg><button class="hl">ab</button><svg class="c"><use href="#caret"/></svg><button class="red">A</button><svg class="c"><use href="#caret"/></svg></div>
      </div><p>Font<svg class="tiny"><use href="#launcher"/></svg></p></section>
      <section class="g para"><div class="gc rows">
        <div class="row"><button aria-label="Bullets"><svg viewBox="0 0 18 18"><path d="M7 4h10M7 9h10M7 14h10" stroke="#777"/><path d="M2 4h3M2 9h3M2 14h3" stroke="#3b78bd" stroke-width="3"/></svg></button><svg class="c"><use href="#caret"/></svg><button aria-label="Numbering"><svg viewBox="0 0 18 18"><path d="M7 4h10M7 9h10M7 14h10" stroke="#777"/><path d="M3 2v4M2 8h2v2H2M2 13h2v3H2" stroke="#3b78bd" fill="none"/></svg></button><svg class="c"><use href="#caret"/></svg><button aria-label="Multilevel"><svg viewBox="0 0 18 18"><path d="M5 3h9M9 8h8M12 14h5" stroke="#777"/><path d="M2 1v4M5 7h2v3H5M9 12v4" stroke="#3b78bd" fill="none"/></svg></button><svg class="c"><use href="#caret"/></svg><hr><button aria-label="Outdent"><svg viewBox="0 0 18 18"><path d="M2 3h14M9 7h7M9 11h7M2 15h14" stroke="#777"/><path d="M8 9H1M4 6L1 9l3 3" stroke="#3b78bd" stroke-width="2" fill="none"/></svg></button><button aria-label="Indent"><svg viewBox="0 0 18 18"><path d="M2 3h14M9 7h7M9 11h7M2 15h14" stroke="#777"/><path d="M0 9h7M4 6l3 3-3 3" stroke="#3b78bd" stroke-width="2" fill="none"/></svg></button><hr><button aria-label="Sort"><svg viewBox="0 0 18 18"><path d="M2 8l3-7 3 7M3 6h4" stroke="#3b78bd" fill="none"/><path d="M3 10h5l-5 7h5" stroke="#8a4fa8" fill="none"/><path d="M13 1v14M10 12l3 4 3-4" stroke="#555" fill="none"/></svg></button><hr><button class="big">¶</button></div>
        <div class="row"><button class="sel" aria-label="Align left"><svg viewBox="0 0 18 18"><path d="M2 3h14M2 7h9M2 11h14M2 15h9" stroke="#555"/></svg></button><button aria-label="Center"><svg viewBox="0 0 18 18"><path d="M2 3h14M5 7h8M2 11h14M5 15h8" stroke="#555"/></svg></button><button aria-label="Align right"><svg viewBox="0 0 18 18"><path d="M2 3h14M7 7h9M2 11h14M7 15h9" stroke="#555"/></svg></button><button aria-label="Justify"><svg viewBox="0 0 18 18"><path d="M2 3h14M2 7h14M2 11h14M2 15h14" stroke="#555"/></svg></button><hr><button aria-label="Line spacing"><svg viewBox="0 0 18 18"><path d="M8 3h9M8 7h9M8 11h9M8 15h9" stroke="#777"/><path d="M3.500 1v16M1 4l2.500-3L6 4M1 14l2.500 3L6 14" stroke="#3b78bd" fill="none" stroke-width="1.500"/></svg></button><svg class="c"><use href="#caret"/></svg><hr><button aria-label="Shading"><svg viewBox="0 0 18 18"><path d="M3 8l6-6 6 6-6 5zM9 2v6" fill="#fff" stroke="#777"/><path d="M14 7c3 3 3 5 1 6z" fill="#3b78bd"/><path d="M2 15h14v3H2z" fill="#ddd" stroke="#999"/></svg></button><svg class="c"><use href="#caret"/></svg><button aria-label="Borders"><svg viewBox="0 0 18 18"><path d="M2 2.500h14M2 8.500h14M2.500 2v13M9 2v13M15.500 2v13" stroke="#777" stroke-dasharray="1 1"/><path d="M2 16h14" stroke="#333" stroke-width="2"/></svg></button><svg class="c"><use href="#caret"/></svg></div>
      </div><p>Paragraph<svg class="tiny"><use href="#launcher"/></svg></p></section>
      <section class="g styles"><div class="gallery">
        <button class="sel"><span>AaBbCcDc</span>¶ Normal</button><button><span>AaBbCcDc</span>¶ No Spac...</button><button class="blue h"><span>AaBbCc</span>Heading 1</button><button class="blue m"><span>AaBbCcD</span>Heading 2</button><button class="title"><span>AaB</span>Title</button><button class="grey"><span>AaBbCcD</span>Subtitle</button><button class="it"><span>AaBbCcDc</span>Subtle Em...</button><button class="it dark"><span>AaBbCcDc</span>Emphasis</button><button class="it lb"><span>AaBbCcDc</span>Intense E...</button><button class="bold"><span>AaBbCcDc</span>Strong</button><button class="it"><span>AaBbCcDc</span>Quote</button><button class="it lb lined"><span>AaBbCcDc</span>Intense Q...</button><button class="grey sc"><span>AaBbCcDc</span>Subtle Ref...</button><button class="lb bold sc"><span>AaBbCcDc</span>Intense Re...</button>
        <div class="gscroll"><svg class="tiny" viewBox="0 0 8 8"><path fill="#bbb" d="M1 6h6L4 3z"/></svg><svg class="tiny"><use href="#caret"/></svg><svg class="tiny" viewBox="0 0 8 8"><path d="M1 1h6" stroke="#666"/><path fill="#666" d="M1 3h6L4 6z"/></svg></div>
      </div><p>Styles<svg class="tiny"><use href="#launcher"/></svg></p></section>
      <section class="g edit"><div class="col"><button><svg viewBox="0 0 14 14"><path d="M1 13V6l2-5h2l1 4h2l1-4h2l2 5v7H9V8H5v5z" fill="#555"/></svg>Find <svg class="tiny"><use href="#caret"/></svg></button><button><svg viewBox="0 0 14 14"><path d="M1 5h3v-3H1M7 0v5h3V2H7M5 13h3v-3H5M13 10h-3v3h3" stroke="#555" fill="none"/><path d="M1 7v4h3" stroke="#3b78bd" fill="none" stroke-width="2"/></svg>Replace</button><button><svg viewBox="0 0 14 14"><path d="M4 1v11l3-3 2 4 1-1-2-4h4z" fill="#fff" stroke="#666"/></svg>Select<svg class="tiny"><use href="#caret"/></svg></button></div><p>Editing</p></section>
      <section class="g gram"><button><svg width="28" height="26" viewBox="0 0 28 26"><circle cx="12" cy="15" r="10.500" fill="#23b26d"/><path d="M16 11a6 6 0 1 0 1.500 5H13" fill="none" stroke="#fff" stroke-width="2"/><rect x="16" y="0" width="12" height="9" rx="3" fill="#e05252"/><path d="M19 2v5M22 4.500h4M24 3v3" stroke="#fff"/></svg>Enable<br>Grammarly</button><p>Grammarly</p></section>
      <section class="rest"><svg width="9" height="6"><path d="M1 5l3-4 3 4" fill="none" stroke="#444" stroke-width="1.500"/></svg></section>
    </div>
    <div class="canvas">
      <div class="vr"><span class="corner">L</span>
        <svg width="12" height="830" font-size="9" font-family="Open Sans, sans-serif" fill="#444"><rect width="12" height="830" fill="#fff"/><rect width="12" height="125" fill="#e1e1e1"/><rect y="2" width="11" height="828" fill="url(#vticks)"/><g text-anchor="middle"><text transform="translate(9 5) rotate(-90)">1</text><text transform="translate(9 247) rotate(-90)">1</text><text transform="translate(9 369) rotate(-90)">2</text><text transform="translate(9 492) rotate(-90)">3</text><text transform="translate(9 614) rotate(-90)">4</text><text transform="translate(9 736) rotate(-90)">5</text></g><path d="M.5 0v830M11.500 0v830" stroke="#ddd"/></svg></div>
      <div class="pages">
        <svg class="ruler" width="1042" height="24" font-size="9" font-family="Open Sans, sans-serif" fill="#444"><rect y="4" width="1042" height="11" fill="#fff" stroke="#e1e1e1"/><rect y="4" width="123" height="11" fill="#e1e1e1"/><rect x="916" y="4" width="126" height="11" fill="#e1e1e1"/><g transform="translate(0 4)"><rect width="1042" height="11" fill="url(#ticks)"/></g><g text-anchor="middle"><text x="3" y="13">1</text><text x="244" y="13">1</text><text x="367" y="13">2</text><text x="489" y="13">3</text><text x="612" y="13">4</text><text x="734" y="13">5</text><text x="857" y="13">6</text><text x="979" y="13">7</text></g><path d="M118.500 1.500h8v4l-4 4-4-4zM118.500 17.500v-4l4-4 4 4v4zM118.500 17.500h8v5h-8zM912.500 17.500v-4l4-4 4 4v4z" fill="#fff" stroke="#777"/></svg>
        <div class="page">
          <p>Hey, <u>It’s</u> Ezell here with another Deck Optimizer video.</p>
          <p>&nbsp;</p>
          <p>How many of you have created a deck, yet find yourselves testing the opening hand combos the old<br>fashioned way? After testing it out, you believe the ratios are great, only to realize things are not going<br>so well in actual <u>duels?</u></p>
          <p>This video will show you how to calculate the probability of drawing into a specific card combination.</p>
          <p>The purpose of this guide is to save you all as much time as possible when deck building. That way you<br>all can duel with some peace of mind, knowing how consistent your plays are.</p>
        </div>
      </div>
    </div>
    <footer class="status"><span>PAGE 1 OF 1</span><span>103 WORDS</span>
      <svg viewBox="0 0 16 16"><path d="M7 14l-5-2V2h5v12l2-2M10 2h3v3M10 7l4 5M14 7l-4 5" fill="none" stroke="#fff"/></svg>
      <svg viewBox="0 0 16 16"><circle cx="6" cy="4" r="3" fill="#fff"/><path d="M3 7h11v8H3zM10 2h4v3h-4z" fill="#fff"/><path d="M5 10h8M5 13h8" stroke="#2b579a" stroke-dasharray="2 1"/></svg>
      <span class="grow"></span>
      <button aria-label="Read mode"><svg viewBox="0 0 16 16"><path d="M1 2h6v10H1zM9 2h6v10H9zM8 1v14M2 5h5M2 8h5M9 5h5M9 8h5" fill="none" stroke="#fff"/></svg></button><button class="sel" aria-label="Print layout"><svg viewBox="0 0 16 16"><path d="M1 1h14v14H1zM3 4h10M3 7h10M3 9.500h10M3 12h10" fill="none" stroke="#fff"/></svg></button><button aria-label="Web layout"><svg viewBox="0 0 16 16"><path d="M8 14H1V1h12v6M3 4h8M3 7h6M3 10h4" fill="none" stroke="#fff"/><circle cx="12" cy="12" r="3.500" fill="#cde"/></svg></button>
      <div class="zoom"><b>−</b><input type="range" min="0" max="100" value="56" aria-label="Zoom"><b>+</b></div><span class="pct">140%</span>
    </footer>
  </div>
  <footer class="taskbar second">
    <div class="ghost" aria-hidden="true"><span>Desktop</span><span>Documents</span></div>
    <button aria-label="Start"><svg><use href="#i-win"/></svg></button>
    <button aria-label="Search"><svg><use href="#i-ring"/></svg></button>
    <button aria-label="Task view"><svg><use href="#i-view"/></svg></button>
    <div class="apps">
      <button aria-label="File Explorer"><svg><use href="#i-folder"/></svg></button><button class="run" aria-label="Calculator"><svg><use href="#i-calc"/></svg></button><button aria-label="Mail"><svg><use href="#i-mail"/></svg></button><button aria-label="Notepad++"><svg><use href="#i-npp"/></svg></button><button aria-label="Kindle"><svg><use href="#i-kindle"/></svg></button><button aria-label="Origin"><svg><use href="#i-origin"/></svg></button><button aria-label="Steam"><svg><use href="#i-steam"/></svg></button><button class="run" aria-label="Quill"><svg><use href="#i-feather"/></svg></button><button class="run" aria-label="Excel"><svg><use href="#i-excel"/></svg></button><button aria-label="Calendar"><svg><use href="#i-cal"/></svg></button><button aria-label="Voice Recorder"><svg><use href="#i-mic"/></svg></button><button aria-label="Audacity"><svg><use href="#i-aud"/></svg></button><button aria-label="Unity"><svg><use href="#i-unity"/></svg></button><button aria-label="Game"><svg><use href="#i-girl"/></svg></button><button class="run active" aria-label="Chrome"><svg><use href="#i-chrome"/></svg></button><button class="run" aria-label="Clover"><svg><use href="#i-clover"/></svg></button><button class="run" aria-label="Discord"><svg><use href="#i-discord"/></svg></button><button class="run" aria-label="Snipping Tool"><svg><use href="#i-snip"/></svg></button><button class="run" aria-label="Player"><svg><use href="#i-play"/></svg></button><button class="run" aria-label="Acrobat"><svg><use href="#i-pdf"/></svg></button><button class="run" aria-label="Word"><svg><use href="#i-word"/></svg></button>
    </div>
    <p class="clock">1:51 PM<br>1/15/2017</p>
  </footer>
</section>
</div>
</body>
</html>
```
FILE: styles.css
```css
* { box-sizing: border-box; }
body { margin: 0; background: #000; font-family: "Open Sans", "Noto Sans", sans-serif; font-size: 11px; color: #222; }
.defs { display: block; width: 0; height: 0; position: absolute; }
p, h1, h2, h3, h4, ul, blockquote { margin: 0; padding: 0; font-weight: normal; }
ul { list-style: none; }
a { text-decoration: none; color: #0645ad; }
a.seen { color: #0b0080; }
button { font: inherit; color: inherit; background: none; border: 0; padding: 0; margin: 0; }
input { font: inherit; border: 0; background: none; padding: 0; margin: 0; min-width: 0; }
hr { border: 0; margin: 0; }
.tiny { width: 8px; height: 8px; flex: none; }

.desktop { display: grid; grid-template-columns: 4fr 3fr; height: 100vh; overflow: hidden; }
.screen-left { display: flex; flex-direction: column; min-width: 0; min-height: 0; background: #fff; }
.screen-right { display: flex; flex-direction: column; min-width: 0; background: #000; }

/* browser frame */
.chrome { flex: none; background: #f2f2f2; border-bottom: 1px solid #b3b3b3; }
.tabstrip { display: flex; height: 26px; background: #fff; border-bottom: 1px solid #aaa; }
.tabs { display: grid; grid-template-columns: repeat(5, 177px); padding-left: 5px; }
.tab { position: relative; z-index: 0; width: 187px; height: 26px; padding: 2px 12px 0 15px; display: flex; align-items: center; gap: 4px; white-space: nowrap; color: #555; }
.tab::before, .tab::after { content: ""; position: absolute; z-index: -1; inset: 0; background: #a8a8a8; clip-path: polygon(11px 0, 176px 0, 100% 100%, 0 100%); }
.tab::after { background: #d9d9d9; inset: 1px 1px 1px; clip-path: polygon(11px 0, 174px 0, 100% 100%, 0 100%); }
.tab.on { z-index: 1; color: #111; }
.tab.on::after { background: #f2f2f2; bottom: 0; }
.tab span { flex: 1; overflow: hidden; mask-image: linear-gradient(90deg, #000 90%, transparent); }
.tab button { width: 14px; font-size: 10px; color: #666; }
.fav { width: 15px; height: 15px; flex: none; background: #fff; border-radius: 2px; font: 13px/15px "Liberation Serif", serif; text-align: center; color: #000; }
.newtab { width: 32px; height: 16px; margin: 6px 0 0 14px; background: #d4d4d4; border: 1px solid #bbb; border-radius: 2px; transform: skewX(20deg); }
.winctl { margin-left: auto; display: flex; }
.winctl button { width: 41px; height: 24px; display: grid; place-items: center; }
.winctl .user { width: 36px; height: 18px; margin-right: 8px; background: #b0b0b0; color: #fff; font-size: 10px; }
.toolbar { display: flex; align-items: center; height: 31px; padding: 0 4px; }
.toolbar > button { width: 26px; height: 26px; display: grid; place-items: center; }
.toolbar > button svg { width: 15px; height: 15px; }
.omnibox { flex: 1; height: 26px; margin-left: 3px; display: flex; align-items: center; gap: 7px; padding: 0 7px; background: #fff; border: 1px solid #a6a6a6; border-radius: 3px; font-size: 12px; }
.secure { color: #0b8043; padding-right: 7px; border-right: 1px solid #ccc; line-height: 16px; }
.url { flex: 1; color: #888; font-size: 13px; }
.url i { font-style: normal; color: #0b8043; }
.url b { font-weight: normal; color: #111; }
.exts { display: flex; width: 294px; justify-content: space-around; }
.exts svg { width: 15px; height: 15px; overflow: visible; }
.bookmarks { display: grid; align-items: center; height: 24px; padding-left: 10px; grid-template-columns: 109fr 150fr 75fr 101fr 150fr 150fr 151fr 102fr 106fr 94fr 85fr 75fr 65fr 68fr 68fr 149fr 124fr 85fr 150fr 133fr 75fr 121fr 21fr 137fr; }
.bookmarks a { display: flex; align-items: center; gap: 3px; min-width: 0; white-space: nowrap; color: #222; }
.bookmarks .long { margin-right: 10px; overflow: hidden; mask-image: linear-gradient(90deg, #000 calc(100% - 24px), transparent); }
.bookmarks a svg { width: 14px; height: 14px; flex: none; }
.bookmarks .more { font-size: 14px; line-height: 16px; }
.bookmarks .other { border-left: 1px solid #bbb; padding-left: 9px; }

/* wiki page */
.viewport { flex: 1; min-height: 0; display: flex; overflow: hidden; background: #f6f6f6; font-family: "Liberation Sans", Arial, "Noto Sans", "DejaVu Sans", "Noto Sans CJK KR", sans-serif; }
.side { width: 161px; flex: none; background: linear-gradient(#fff 40px, #f6f6f6 73px); line-height: 1.59; }
.logo { display: flex; flex-direction: column; align-items: center; height: 165px; padding-top: 17px; color: #111; font-family: "Liberation Serif", serif; }
.logo svg { flex: none; }
.wordmark { font-size: 17px; line-height: 22px; margin-top: 2px; }
.wordmark b { font-weight: normal; font-size: 23px; }
.tagline { font-size: 12px; line-height: 14px; }
.side ul { padding-left: 38px; }
.side ul.top { padding-left: 27px; }
.side h3 { display: flex; justify-content: space-between; align-items: center; margin: 4px 17px 0 21px; padding-top: 3px; font-size: 11px; line-height: 17px; color: #4d4d4d; border-top: 1px solid #ddd; }
.side li { white-space: nowrap; }

.main { flex: 1; min-width: 0; display: flex; flex-direction: column; }
.wikihead { flex: none; height: 73px; background: linear-gradient(#fff 50%, #f6f6f6); padding-right: 14px; display: flex; flex-direction: column; justify-content: space-between; border-bottom: 1px solid #a7d7f9; }
.personal { display: flex; justify-content: flex-end; gap: 9px; padding: 9px 2px 0; line-height: 14px; color: #666; }
.personal span { margin-left: -5px; }
.wikitabs { display: flex; height: 36px; margin-bottom: -1px; font-size: 12px; }
.wikitabs a { padding: 16px 6px 0; line-height: 14px; border-right: 1px solid #b9dff5; background: linear-gradient(#fff, #e8f2f8); border-bottom: 1px solid #a7d7f9; }
.wikitabs a.on { color: #222; background: linear-gradient(#fff, #fff); border-bottom-color: #fff; }
.fill { flex: 1; border-right: 1px solid #b9dff5; margin-left: -1px; }
.search { display: flex; align-items: center; width: 315px; height: 23px; margin: 9px 2px 0 8px; padding: 0 5px 0 3px; border: 1px solid #aaa; background: #fff; }
.search input { flex: 1; font-size: 12px; }
.search input::placeholder { color: #999; }
article { flex: 1; background: #fff; border-left: 1px solid #c8d4dc; padding: 17px 22px 0; overflow: hidden; }
h1 { font: 29px/35px "Liberation Serif", Georgia, serif; color: #000; border-bottom: 1px solid #a2a9b1; }
.from { margin-top: 8px; font-size: 12px; line-height: 16px; }
.redir { padding-left: 16px; line-height: 15px; color: #555; }
.body { display: flex; gap: 13px; font-size: 13px; line-height: 20px; }
.prose { flex: 1; min-width: 0; white-space: nowrap; }
sup { font-size: 80%; line-height: 0; }
.p1 { margin-top: 15px; }
.p2 { margin-top: 8px; }
.p3 { margin-top: 7px; }
.p4 { margin-top: 20px; }
.p5 { margin-top: 7px; }
blockquote { margin: 19px 0 0 37px; }
.math { padding-left: 20px; font-family: "Liberation Serif", serif; font-size: 17px; color: #000; }
.m1 { margin-top: 5px; }
.m2 { margin-top: 5px; }
.m2 .ref { font: 11px/1 "Liberation Sans", sans-serif; }
.toc { width: 320px; height: 543px; margin-top: 6px; padding: 6px 7px; border: 1px solid #a2a9b1; background: #f8f9fa; font-size: 12px; line-height: 1.68; }
.toc h4 { font-weight: bold; text-align: center; line-height: 20px; margin-bottom: 3px; color: #000; }
.toc h4 span { font-weight: normal; margin-left: 3px; }
.toc li a { margin-left: 6px; }
.l2 { padding-left: 27px; }
.l3 { padding-left: 53px; }
h2 { margin-top: 19px; font: 21px/26px "Liberation Serif", Georgia, serif; color: #000; border-bottom: 1px solid #a2a9b1; }
h2 small { font: 12px/1 "Liberation Sans", sans-serif; margin-left: 8px; color: #555; }
.prod { display: flex; align-items: center; gap: 5px; height: 60px; }
.stack { display: flex; flex-direction: column; align-items: center; gap: 2px; font-size: 12px; line-height: 11px; }
.stack svg { flex: none; }
.stack em { font-style: normal; }
.cases { display: flex; align-items: center; gap: 5px; height: 56px; }
.cases span:last-child { margin-left: 10px; }

table { flex: none; width: 238px; height: 863px; margin-top: 15px; border-collapse: collapse; line-height: 18px; font-size: 13px; color: #222; white-space: nowrap; background: #f8f9fa; }
caption { font-weight: bold; line-height: 20px; padding-bottom: 2px; color: #000; }
th, td { border: 1px solid #a2a9b1; padding: 0 5px; text-align: right; }
th { background: #eaecf0; text-align: center; }
th.n { width: 69px; }
td.sci { text-align: left; }
td sup { font-size: 10px; }
td sup sup { font-size: 8px; }
.scroll { width: 16px; flex: none; background: #f1f1f1; display: flex; flex-direction: column; }
.thumb { height: 150px; margin: 0 1px auto; background: #c1c1c1; }

/* taskbars */
.taskbar { flex: none; height: 37px; display: flex; background: #030303; color: #fff; }
.taskbar button { width: 44px; display: grid; place-items: center; }
.taskbar button svg { width: 20px; height: 20px; }
.cortana { width: 314px; display: flex; align-items: center; gap: 6px; padding: 0 10px 0 6px; background: #333; font-size: 13px; }
.cortana svg { width: 24px; height: 24px; }
.cortana .micr { width: 20px; height: 20px; }
.cortana input { flex: 1; }
.cortana input::placeholder { color: #aaa; }
.taskbar .apps { display: grid; grid-template-columns: repeat(21, 1fr); width: 941px; margin-left: 2px; }
.taskbar .apps button { width: auto; margin: 0 2px; border-bottom: 3px solid transparent; padding-top: 3px; }
.taskbar .apps .run { border-bottom-color: #fbd7a9; }
.taskbar .apps .active { background: #505050; }
.tray { margin-left: auto; display: flex; align-items: center; gap: 8px; padding-right: 15px; }
.tray > svg { width: 14px; height: 14px; }
.clock { text-align: center; font-size: 11px; line-height: 16px; padding: 2px 7px 0; }
.notes { display: flex; align-items: center; }
.notes svg { width: 18px; height: 18px; }
.notes b { width: 15px; height: 15px; margin: 10px -6px 0 -8px; border: 1px solid #999; border-radius: 8px; background: #333; font: 9px/13px "Open Sans", sans-serif; text-align: center; }
.second { position: relative; z-index: 0; background: linear-gradient(90deg, #000 146px, #262626 146px, #262626 1293px, #000 1293px); }
.second .clock { margin-left: auto; padding-right: 5px; }
/* start menu labels showing dimly through the translucent bar */
.ghost { position: absolute; z-index: -1; left: 197px; top: 0; display: grid; gap: 6px; line-height: 14px; color: #0d0d0d; }

/* word processor */
.word { display: flex; flex-direction: column; height: 951px; background: #fff; color: #444; }
.wtitle { flex: none; height: 23px; display: grid; grid-template-columns: 1fr auto 1fr; align-items: center; }
.qat { display: flex; align-items: center; gap: 14px; padding-left: 9px; }
.qat svg { width: 14px; height: 14px; }
.qat .tiny { width: 8px; height: 8px; margin-left: -8px; }
.qat .more { margin-left: 0; }
.doc-name { color: #999; }
.wctl { display: flex; justify-content: flex-end; align-items: center; gap: 14px; padding-right: 7px; color: #999; }
.wctl b { font-size: 13px; line-height: 16px; }
.wctl svg { width: 13px; height: 13px; }
.wtabs { flex: none; height: 23px; display: grid; grid-template-columns: 54px 74px 60px 63px 96px 87px 76px 63px 52px 69px 129px 1fr auto; border-bottom: 1px solid #d4d4d4; line-height: 23px; white-space: nowrap; }
.wtabs a { color: #444; font-size: 10px; }
.wtabs .file { background: #2b579a; color: #fff; text-align: center; }
.wtabs .home { margin: 0 14px -1px 4px; height: 23px; text-align: center; color: #2b579a; border: 1px solid #d4d4d4; border-bottom-color: #fff; background: #fff; line-height: 22px; }
.acct { display: flex; align-items: center; gap: 7px; padding-right: 9px; font-size: 10px; }
.avatar { width: 22px; height: 22px; }
.ribbon { flex: none; height: 85px; display: flex; border-bottom: 1px solid #d4d4d4; font-size: 11px; white-space: nowrap; }
.g { display: flex; flex-direction: column; justify-content: space-between; position: relative; flex: none; background: linear-gradient(#e1e1e1, #e1e1e1) right 4px / 1px 76px no-repeat; }
.g > p { position: relative; display: flex; justify-content: center; align-items: center; font-size: 10px; line-height: 14px; color: #666; }
.g > p svg { position: absolute; right: 4px; }
.clip { width: 144px; }
.font { width: 241px; }
.para { width: 205px; }
.styles { flex: 1; min-width: 0; }
.edit { width: 72px; }
.gram { width: 68px; }
.rest { width: 76px; display: flex; justify-content: flex-end; align-items: flex-end; padding: 4px; }
.gc { display: flex; padding-top: 6px; }
.paste { width: 44px; display: flex; flex-direction: column; align-items: center; line-height: 18px; }
.col { display: flex; flex-direction: column; padding-top: 2px; }
.col button { display: flex; align-items: center; gap: 3px; height: 21px; font-size: 11px; }
.gc .col { padding-top: 0; }
.col button svg:first-child { width: 14px; height: 14px; }
.off { color: #999; }
.rows { flex-direction: column; gap: 7px; padding: 9px 0 0 4px; }
.row { display: flex; height: 22px; align-items: center; }
.row button { width: 20px; height: 22px; display: flex; align-items: center; justify-content: center; flex: none; }
.row button svg { width: 15px; height: 15px; }
.row .c { width: 7px; height: 7px; margin: 0 2px; flex: none; }
.row hr { width: 1px; height: 20px; margin: 0 4px 0 3px; background: #ddd; }
.row .combo { width: 86px; height: 21px; justify-content: space-between; padding: 0 3px; border: 1px solid #aaa; color: #111; font-size: 10px; }
.row .size { width: 41px; margin-left: -1px; }
.row .combo svg { width: 8px; height: 8px; }
.row .big { font-size: 15px; }
.row sup { color: #3b78bd; font-size: 8px; align-self: flex-start; line-height: 10px; }
.row sub { font-size: 7px; color: #3b78bd; }
.row s { font-size: 9px; }
.row .sel { background: #c2d5f2; }
.row .fx { color: #fff; font-weight: bold; font-size: 15px; -webkit-text-stroke: 1px #3b78bd; }
.row .hl, .row .red { height: 17px; margin: 0 2px; width: 16px; border-bottom: 4px solid #ff0; font-style: italic; font-weight: bold; line-height: 12px; }
.row .red { border-color: #f00; font-style: normal; font-size: 13px; }
.gallery { margin: 6px 7px 0 5px; height: 54px; border: 1px solid #ababab; display: grid; grid-template-columns: repeat(14, minmax(0, 1fr)) 13px; }
.gallery button { display: flex; flex-direction: column; align-items: center; justify-content: flex-end; font-size: 10px; line-height: 16px; padding: 0 3px 4px; color: #555; }
.gallery span { height: 30px; line-height: 28px; font-family: Lato, sans-serif; font-size: 12px; color: #000; align-self: stretch; text-align: center; }
.gallery .sel { border: 4px solid #c2d5f2; padding: 0; }
.gallery .blue span { color: #2e74b5; }
.gallery .h span { font-size: 16px; }
.gallery .m span { font-size: 14px; }
.gallery .title span { font-size: 28px; font-weight: 300; }
.gallery .grey span { color: #666; font-size: 13px; }
.gallery .it span { font-style: italic; color: #404040; }
.gallery .dark span { color: #000; }
.gallery .lb span { color: #5b9bd5; }
.gallery .bold span { font-weight: bold; }
.gallery .sc span { font-variant: small-caps; font-size: 12px; }
.gallery .lined span { height: 20px; line-height: 18px; margin-bottom: 6px; border: solid #5b9bd5; border-width: 1px 0; }
.gscroll { display: grid; place-items: center; border-left: 1px solid #ababab; }
.gram button { padding-top: 6px; display: block; line-height: 15px; }
.gram button svg { display: block; margin: 0 auto 3px; }
.canvas { flex: 1; min-height: 0; display: grid; grid-template-columns: 20px 1fr 13px; background: linear-gradient(#fff, #efefef); overflow: hidden; }
.vr { display: flex; flex-direction: column; align-items: center; gap: 22px; }
.vr svg { flex: none; }
.corner { width: 18px; height: 20px; flex: none; border: 3px solid #e1e1e1; font: bold 10px/14px "Open Sans", sans-serif; text-align: center; }
.pages { display: flex; flex-direction: column; align-items: center; }
.ruler { flex: none; display: block; }
.page { flex: none; width: 1042px; height: 900px; margin-top: 21px; padding: 119px 122px 0; background: #fff; border: 1px solid #c6c6c6; color: #000; font-family: Lato, Carlito, sans-serif; font-size: 17px; line-height: 25px; white-space: nowrap; }
.page p { margin-bottom: 13px; }
.page u { text-decoration: underline wavy #00f 1px; text-underline-offset: 2px; }
.status { flex: none; height: 20px; display: flex; align-items: center; background: #2b579a; color: #fff; font-size: 10px; }
.status > span:not(.grow) { margin: 0 12px 0 7px; }
.status > svg { width: 13px; height: 13px; margin: 0 9px; }
.grow { flex: 1; }
.status button { width: 35px; height: 20px; display: grid; place-items: center; }
.status button svg { width: 14px; height: 14px; }
.status .sel { background: #19478a; }
.zoom { display: flex; align-items: center; gap: 3px; margin-left: 5px; }
.zoom b { font-size: 13px; line-height: 16px; }
.zoom input { appearance: none; width: 92px; height: 11px; background: linear-gradient(#fff, #fff) center / 100% 1px no-repeat; }
.zoom input::-webkit-slider-thumb { appearance: none; width: 4px; height: 11px; background: #fff; }
.status > .pct { margin: 0 8px 0 12px; }
```
